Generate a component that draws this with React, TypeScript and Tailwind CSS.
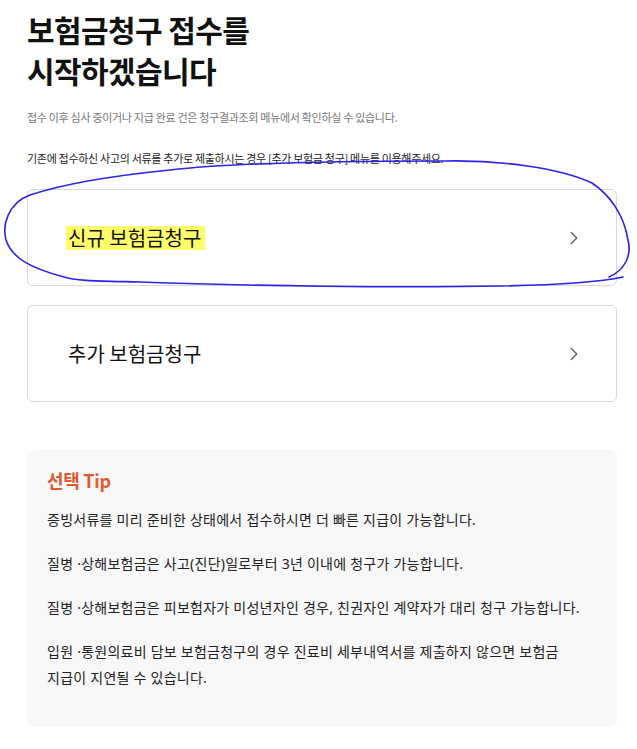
import { ChevronRight } from "lucide-react";

const FONT = { fontFamily: '"Noto Sans CJK KR", "Noto Sans", sans-serif' };
const TIP_FONT = { fontFamily: '"Noto Sans", "Noto Sans CJK KR", sans-serif' };

const tips = [
  "증빙서류를 미리 준비한 상태에서 접수하시면 더 빠른 지급이 가능합니다.",
  "질병 ·상해보험금은 사고(진단)일로부터 3년 이내에 청구가 가능합니다.",
  "질병 ·상해보험금은 피보험자가 미성년자인 경우, 친권자인 계약자가 대리 청구 가능합니다.",
];

const ClaimCard = ({ label, marked }: { label: string; marked?: boolean }) => (
  <button className="flex h-[97px] w-full items-center justify-between rounded-md border border-[#d9d9d9] bg-white pl-[40px] pr-[31px] text-left">
    <span
      className={
        "text-[20px] leading-[24px] tracking-[0px] text-[#111] " +
        (marked ? "-ml-[2px] bg-[#fdfd6a] pl-[2px] pr-[4px]" : "")
      }
    >
      {label}
    </span>
    <ChevronRight className="h-[22px] w-[22px] text-[#555]" strokeWidth={1.3} />
  </button>
);

export default function App() {
  return (
    <div className="relative min-h-[749px] bg-white pl-[27px] pr-[20px] pt-[9px]" style={FONT}>
      <h1 className="text-[30px] font-bold leading-[41px] tracking-[-0.6px] text-[#111]">
        보험금청구 접수를
        <br />
        시작하겠습니다
      </h1>

      <p className="mt-[18px] text-[11px] leading-[16px] tracking-[-0.3px] text-[#777]">
        접수 이후 심사 중이거나 지급 완료 건은 청구결과조회 메뉴에서 확인하실 수 있습니다.
      </p>
      <p className="mt-[25px] text-[11px] leading-[16px] tracking-[-0.3px] text-[#222]">
        기존에 접수하신 사고의 서류를 추가로 제출하시는 경우 [추가 보험금 청구] 메뉴를 이용해주세요.
      </p>

      <div className="mt-[23px] flex flex-col gap-[19px]">
        <ClaimCard label="신규 보험금청구" marked />
        <ClaimCard label="추가 보험금청구" />
      </div>

      <div className="mt-[48px] rounded-lg bg-[#f7f7f7] pb-[36px] pl-[20px] pr-[20px] pt-[17px]">
        <h2 className="text-[18px] font-bold leading-[26px] tracking-[-0.3px] text-[#e05a30]">선택 Tip</h2>
        <ul className="mt-[14px] flex flex-col gap-[18px]" style={TIP_FONT}>
          {tips.map((t) => (
            <li key={t} className="whitespace-nowrap text-[14px] leading-[26px] tracking-[0.25px] text-[#222]">
              {t}
            </li>
          ))}
          <li className="whitespace-nowrap text-[14px] leading-[26px] tracking-[0.25px] text-[#222]">
            입원 ·통원의료비 담보 보험금청구의 경우 진료비 세부내역서를 제출하지 않으면 보험금
            <br />
            지급이 지연될 수 있습니다.
          </li>
        </ul>
      </div>

      {/* hand-drawn annotation */}
      <svg className="pointer-events-none absolute left-0 top-0" width="637" height="320" viewBox="0 0 637 320">
        <path
          d="M 609 277 C 625 270, 632 255, 628 240 C 624 215, 610 195, 592 183 C 560 168, 500 160, 446 161 C 360 161, 240 162, 170 170 C 110 176, 60 185, 30 195 C 8 203, 2 225, 6 240 C 12 258, 30 268, 64 277 C 75 281, 100 281, 140 282 C 250 286, 400 288, 500 286 C 560 285, 600 282, 623 277"
          fill="none"
          stroke="#2a22e6"
          strokeWidth="1.6"
          strokeLinecap="round"
        />
      </svg>
    </div>
  );
}
